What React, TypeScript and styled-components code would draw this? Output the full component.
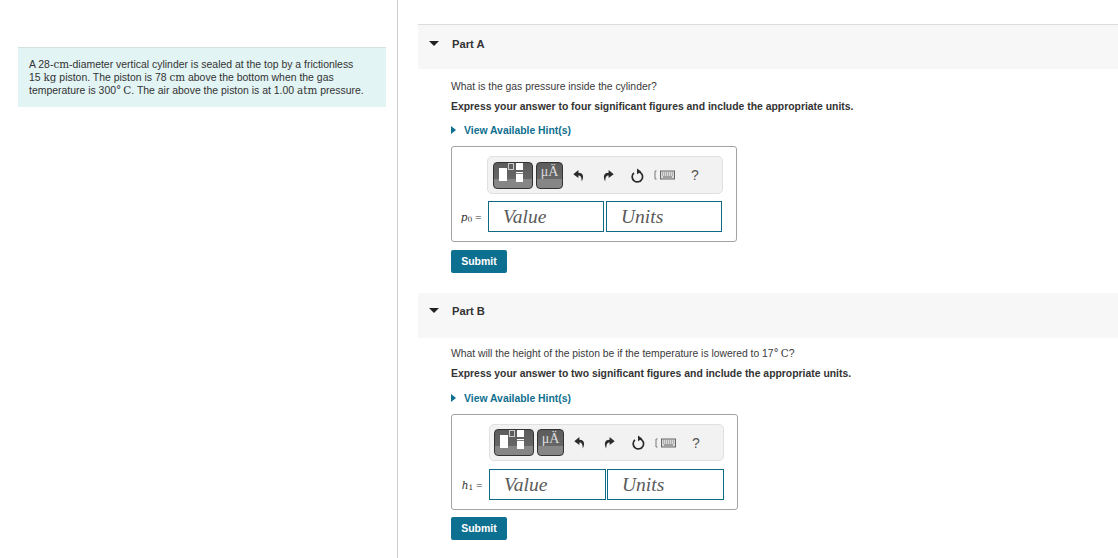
import React from "react";
import styled, { createGlobalStyle } from "styled-components";

const Global = createGlobalStyle`
  html, body { margin: 0; padding: 0; background: #fff; height: 558px; overflow: hidden; }
  body { font-family: "Liberation Sans", Arial, sans-serif; color: #333; }
`;
const Page = styled.div`
  display: flex;
  width: 1118px;
  height: 558px;
  overflow: hidden;
`;
const LeftColumn = styled.aside`
  width: 398px;
  height: 558px;
  box-sizing: border-box;
  flex: none;
  border-right: 1px solid #c9cdd0;
  padding: 47px 11px 0 18px;
`;
const Intro = styled.div`
  background: #e2f4f3;
  border-top: 1px solid #d3e1e1;
  height: 60px;
  box-sizing: border-box;
  padding: 10px 10px 0 11px;
  font-size: 10.45px;
  line-height: 13.2px;
  color: #333;
`;
const MathText = styled.span`
  font-family: "DejaVu Serif", "Liberation Serif", serif;
  font-size: 10.4px;
  line-height: 0;
`;
const RightColumn = styled.main`
  flex: 1;
  min-width: 0;
  padding: 24px 0 0 20px;
`;
const PartHeader = styled.div<{ $first?: boolean }>`
  height: 45px;
  background: #f7f7f7;
  border-top: ${(p) => (p.$first ? "1px solid #dcdcdc" : "none")};
  box-sizing: border-box;
  display: flex;
  align-items: center;
  gap: 13px;
  padding: 0 0 ${(p) => (p.$first ? "7px" : "10px")} 11px;
`;
const Caret = styled.span`
  width: 0;
  height: 0;
  border-left: 5px solid transparent;
  border-right: 5px solid transparent;
  border-top: 5px solid #222;
`;
const PartTitle = styled.span`
  font-size: 11.2px;
  font-weight: 700;
  color: #333;
`;
const PartBody = styled.section<{ $variant: "a" | "b" }>`
  padding: ${(p) => (p.$variant === "a" ? "11px" : "9px")} 0 0 33px;
  height: ${(p) => (p.$variant === "a" ? "224px" : "auto")};
  box-sizing: border-box;
`;
const Question = styled.p`
  margin: 0;
  font-size: 10.35px;
  line-height: 14px;
  color: #3a3a3a;
`;
const Instruction = styled.p`
  margin: 6px 0 0;
  font-size: 10.4px;
  line-height: 14px;
  font-weight: 700;
  color: #333;
`;
const Hint = styled.div<{ $wide?: boolean }>`
  margin-top: ${(p) => (p.$wide ? "11px" : "10px")};
  display: flex;
  align-items: center;
  gap: 8px;
  font-size: 10.4px;
  line-height: 14px;
  font-weight: 700;
  color: #0f6f8f;
`;
const HintArrow = styled.span`
  width: 0;
  height: 0;
  margin-top: -2px;
  border-top: 4px solid transparent;
  border-bottom: 4px solid transparent;
  border-left: 5px solid #0f6f8f;
`;
const AnswerBox = styled.div<{ $wide?: boolean }>`
  margin-top: 8px;
  width: ${(p) => (p.$wide ? "287px" : "286px")};
  height: 96px;
  box-sizing: border-box;
  border: 1px solid #a3a3a3;
  border-radius: 3px;
  padding: 9px 13px 0 0;
  display: flex;
  flex-direction: column;
  align-items: flex-end;
`;
const Toolbar = styled.div<{ $wide?: boolean }>`
  width: ${(p) => (p.$wide ? "235px" : "236px")};
  height: ${(p) => (p.$wide ? "37px" : "38px")};
  box-sizing: border-box;
  background: #f2f2f2;
  border: 1px solid #e0e0e0;
  border-radius: 5px;
  display: flex;
  align-items: center;
  padding-left: ${(p) => (p.$wide ? "4px" : "5px")};
`;
const TemplateButton = styled.div<{ $w: number }>`
  width: ${(p) => p.$w}px;
  height: 27px;
  box-sizing: border-box;
  border: 1px solid #333;
  border-radius: 4px;
  background: linear-gradient(#5c5c5c 0, #666 16px, #868686 16px, #868686 100%);
  display: flex;
  align-items: flex-start;
  justify-content: center;
  overflow: hidden;
  flex: none;
  & + & { margin-left: 3px; }
`;
const MuLabel = styled.span`
  font-family: "Liberation Serif", serif;
  font-size: 14px;
  line-height: 17px;
  color: #dcdcdc;
`;
const ToolSlot = styled.div<{ $w: number }>`
  width: ${(p) => p.$w}px;
  display: flex;
  justify-content: center;
  align-items: center;
  flex: none;
`;
const HelpMark = styled.span`
  font-size: 14px;
  line-height: 16px;
  color: #555;
`;
const AnswerRow = styled.div<{ $wide?: boolean }>`
  margin-top: ${(p) => (p.$wide ? "8px" : "7px")};
  margin-right: ${(p) => (p.$wide ? "0" : "1px")};
  display: flex;
  align-items: center;
  gap: ${(p) => (p.$wide ? "1px" : "2px")};
  position: relative;
`;
const VarLabel = styled.div`
  position: absolute;
  right: 100%;
  margin-right: 6px;
  white-space: nowrap;
  font-family: "DejaVu Serif", serif;
  font-size: 8.5px;
  color: #333;
  & i { font-size: 10.5px; }
  & sub { font-size: 7.5px; vertical-align: -1px; line-height: 0; }
`;
const EntryField = styled.div<{ $w: number }>`
  width: ${(p) => p.$w}px;
  height: 31px;
  box-sizing: border-box;
  border: 1px solid #0f6a85;
  padding-left: 14px;
  font-family: "Liberation Serif", serif;
  font-style: italic;
  font-size: 19.5px;
  line-height: 29px;
  color: #5a5a5a;
`;
const SubmitButton = styled.button<{ $top: number }>`
  display: block;
  margin-top: ${(p) => p.$top}px;
  width: 56px;
  height: 23px;
  padding: 0 0 2px;
  border: none;
  border-radius: 2px;
  background: #0d7090;
  color: #fff;
  font-family: "Liberation Sans", sans-serif;
  font-size: 10.5px;
  font-weight: 700;
`;

const FractionIcon = () => (
  <svg width="38" height="25" viewBox="0 0 38 25">
    <rect x="5" y="5" width="8" height="13" fill="#fff" />
    <rect x="14.5" y="0.5" width="5" height="6" fill="none" stroke="#ccc" strokeWidth="1" />
    <rect x="22" y="0" width="7" height="7" fill="#fff" />
    <rect x="22" y="9" width="7" height="1.2" fill="#fff" />
    <rect x="22" y="11" width="7" height="8" fill="#fff" />
  </svg>
);
const UndoIcon = ({ flip }: { flip?: boolean }) => (
  <svg width="11" height="13" viewBox="0 0 11 13" style={flip ? { transform: "scaleX(-1)" } : undefined}>
    <path d="M5.4 1 L0.3 5.2 L5.4 9 V6.5 C7.6 6.5 8.6 8 8.8 12.5 C10.8 8.5 11 3.7 5.4 3.7 Z" fill="#2b2b2b" />
  </svg>
);
const ResetIcon = () => (
  <svg width="13" height="15" viewBox="0 0 13 15">
    <path d="M7.8 3.7 A5.2 5.2 0 1 1 2.9 4.8" fill="none" stroke="#2b2b2b" strokeWidth="1.7" />
    <path d="M6 0.6 L10.2 3.5 L6 6.2 Z" fill="#2b2b2b" />
  </svg>
);
const KeyboardIcon = () => (
  <svg width="21" height="10" viewBox="0 0 21 10">
    <path d="M2.5 1 H1 V9 H2.5" fill="none" stroke="#777" strokeWidth="1" />
    <rect x="6.5" y="1" width="14" height="8" fill="#d8d8d8" stroke="#666" strokeWidth="1" />
    <path d="M8 3 H19 M8 5 H19" stroke="#888" strokeWidth="1" strokeDasharray="1 1" />
    <path d="M9 7 H18" stroke="#666" strokeWidth="1" />
  </svg>
);

function Answer({ wide, label, sub }: { wide?: boolean; label: string; sub: string }) {
  return (
    <AnswerBox $wide={wide}>
      <Toolbar $wide={wide}>
        <TemplateButton $w={40}><FractionIcon /></TemplateButton>
        <TemplateButton $w={27}><MuLabel>μÄ</MuLabel></TemplateButton>
        <ToolSlot $w={30}><UndoIcon /></ToolSlot>
        <ToolSlot $w={31}><UndoIcon flip /></ToolSlot>
        <ToolSlot $w={26}><ResetIcon /></ToolSlot>
        <ToolSlot $w={28}><KeyboardIcon /></ToolSlot>
        <ToolSlot $w={34}><HelpMark>?</HelpMark></ToolSlot>
      </Toolbar>
      <AnswerRow $wide={wide}>
        <VarLabel><i>{label}</i><sub>{sub}</sub> =</VarLabel>
        <EntryField $w={wide ? 117 : 116}>Value</EntryField>
        <EntryField $w={wide ? 117 : 116}>Units</EntryField>
      </AnswerRow>
    </AnswerBox>
  );
}

export default function App() {
  return (
    <Page>
      <Global />
      <LeftColumn>
        <Intro>
          A 28-<MathText>cm</MathText>-diameter vertical cylinder is sealed at the top by a frictionless<br />
          15 <MathText>kg</MathText> piston. The piston is 78 <MathText>cm</MathText> above the bottom when the gas<br />
          temperature is 300<MathText>°&#8201;C</MathText>. The air above the piston is at 1.00 <MathText>atm</MathText> pressure.
        </Intro>
      </LeftColumn>
      <RightColumn>
        <PartHeader $first><Caret /><PartTitle>Part A</PartTitle></PartHeader>
        <PartBody $variant="a">
          <Question>What is the gas pressure inside the cylinder?</Question>
          <Instruction>Express your answer to four significant figures and include the appropriate units.</Instruction>
          <Hint><HintArrow />View Available Hint(s)</Hint>
          <Answer label="p" sub="0" />
          <SubmitButton $top={8}>Submit</SubmitButton>
        </PartBody>
        <PartHeader><Caret /><PartTitle>Part B</PartTitle></PartHeader>
        <PartBody $variant="b">
          <Question>What will the height of the piston be if the temperature is lowered to 17<MathText>°&#8201;C</MathText>?</Question>
          <Instruction>Express your answer to two significant figures and include the appropriate units.</Instruction>
          <Hint $wide><HintArrow />View Available Hint(s)</Hint>
          <Answer wide label="h" sub="1" />
          <SubmitButton $top={7}>Submit</SubmitButton>
        </PartBody>
      </RightColumn>
    </Page>
  );
}
